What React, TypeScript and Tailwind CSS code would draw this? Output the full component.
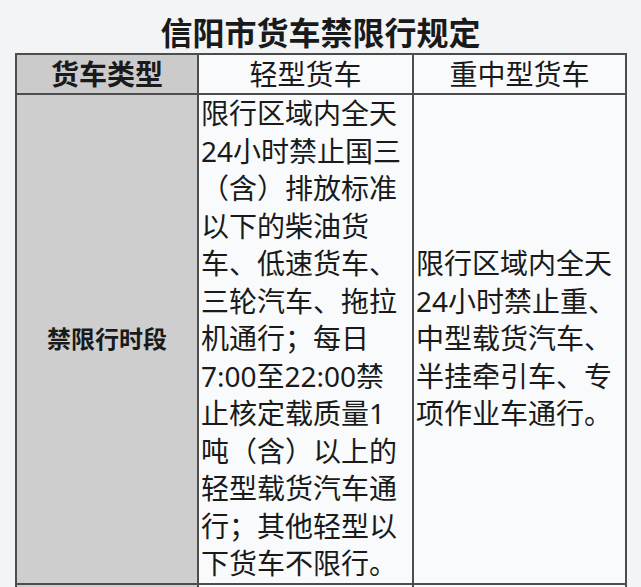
const light = [
  "限行区域内全天",
  "24小时禁止国三",
  "（含）排放标准",
  "以下的柴油货",
  "车、低速货车、",
  "三轮汽车、拖拉",
  "机通行；每日",
  "7:00至22:00禁",
  "止核定载质量1",
  "吨（含）以上的",
  "轻型载货汽车通",
  "行；其他轻型以",
  "下货车不限行。",
];

const heavy = [
  "限行区域内全天",
  "24小时禁止重、",
  "中型载货汽车、",
  "半挂牵引车、专",
  "项作业车通行。",
];

function Lines({ lines }: { lines: string[] }) {
  return (
    <>
      {lines.map((l) => (
        <div key={l} className="whitespace-nowrap">
          {l}
        </div>
      ))}
    </>
  );
}

export default function App() {
  return (
    <div
      className="h-[587px] w-[641px] overflow-hidden bg-[#f2f4f5] text-[#1a1a1a]"
      style={{ fontFamily: '"Noto Sans", "Noto Sans CJK SC", sans-serif' }}
    >
      <h1 className="pt-[13px] text-center text-[32px] font-bold leading-[40px]">
        信阳市货车禁限行规定
      </h1>

      <table className="ml-[15px] w-[610px] table-fixed border-collapse border-2 border-[#4d4d4d]">
        <colgroup>
          <col className="w-[182px]" />
          <col className="w-[215px]" />
          <col className="w-[213px]" />
        </colgroup>
        <thead>
          <tr className="h-[40px]">
            <th className="border-2 border-[#4d4d4d] bg-[#cbcbcb] p-0 text-[28px] font-bold leading-[36px]">
              货车类型
            </th>
            <th className="border-2 border-[#4d4d4d] bg-[#f8fafb] p-0 text-[28px] font-normal leading-[36px]">
              轻型货车
            </th>
            <th className="border-2 border-[#4d4d4d] bg-[#f8fafb] p-0 text-[28px] font-normal leading-[36px]">
              重中型货车
            </th>
          </tr>
        </thead>
        <tbody>
          <tr className="h-[490px]">
            <td className="border-2 border-[#4d4d4d] bg-[#cecece] p-0 text-center text-[24px] font-bold">
              禁限行时段
            </td>
            <td className="border-2 border-[#4d4d4d] bg-[#f8fafb] py-0 pl-[2px] pr-0 align-middle text-[28px] leading-[37.5px]">
              <Lines lines={light} />
            </td>
            <td className="border-2 border-[#4d4d4d] bg-[#f8fafb] py-0 pl-[2px] pr-0 align-middle text-[28px] leading-[37.5px]">
              <Lines lines={heavy} />
            </td>
          </tr>
          <tr className="h-[40px]">
            <td className="border-2 border-[#4d4d4d] bg-[#cecece]" />
            <td className="border-2 border-[#4d4d4d] bg-[#f8fafb]" />
            <td className="border-2 border-[#4d4d4d] bg-[#f8fafb]" />
          </tr>
        </tbody>
      </table>
    </div>
  );
}
